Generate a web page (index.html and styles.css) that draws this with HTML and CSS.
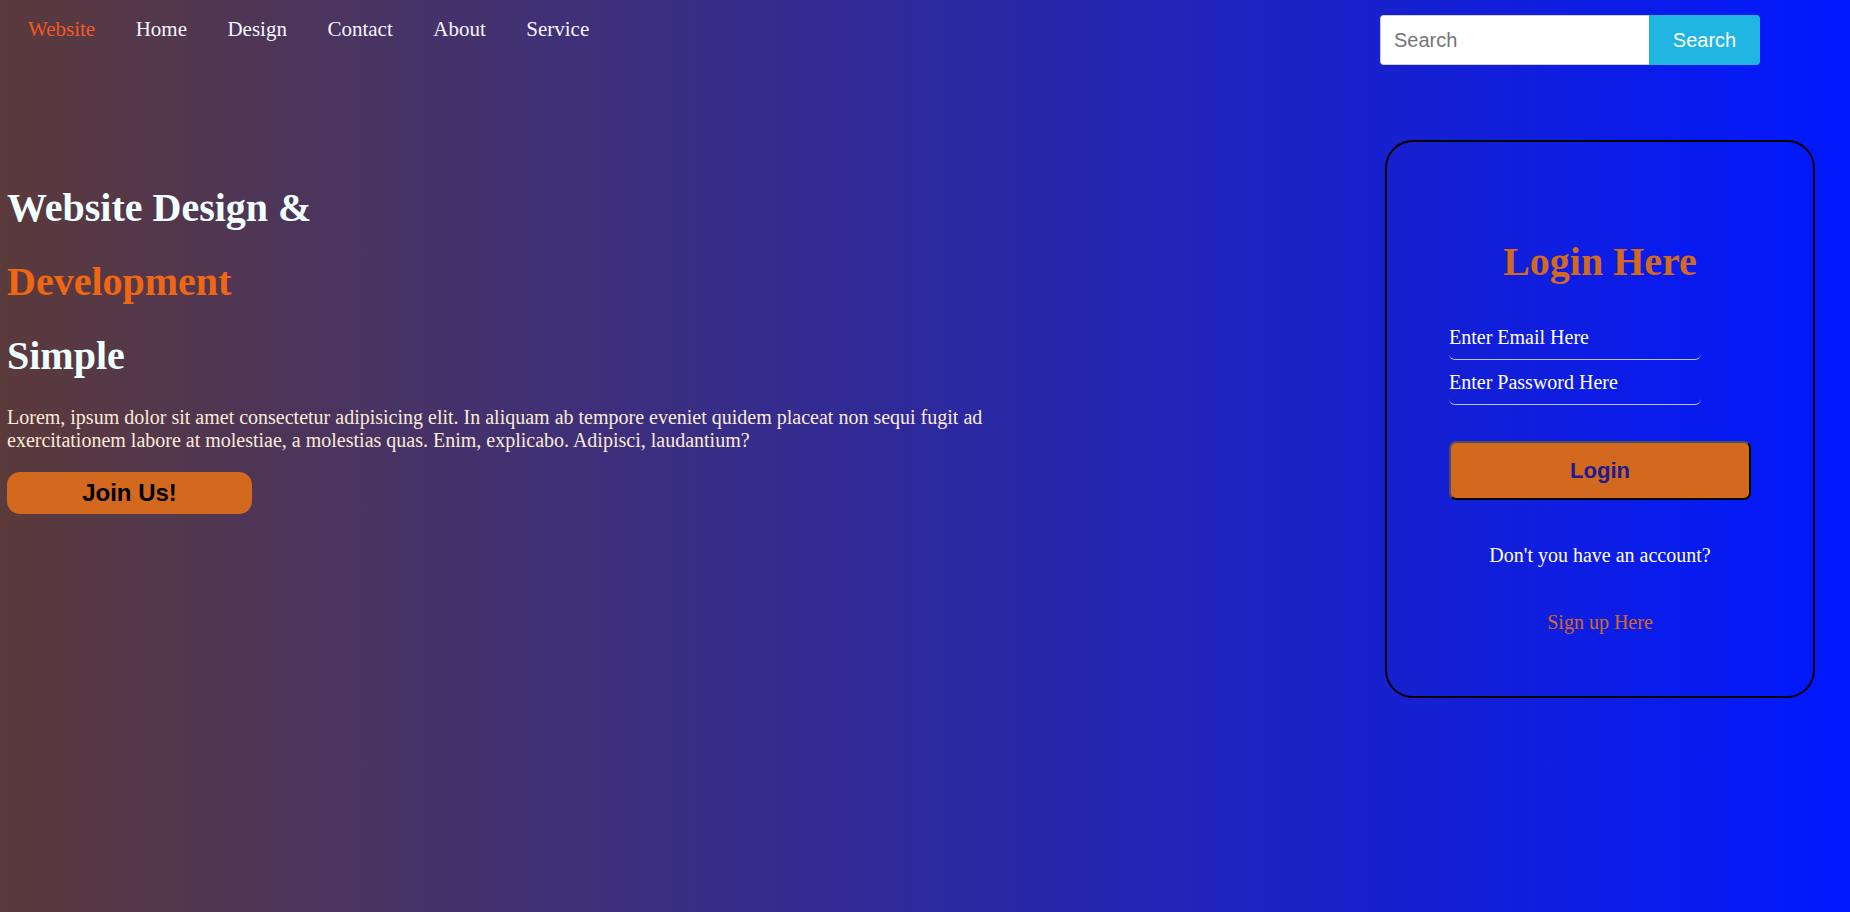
FILE: index.html
```html
<!DOCTYPE html>
<html lang="en">
<head>
<meta charset="UTF-8">
<title>Website Design</title>
<link rel="stylesheet" href="styles.css">
</head>
<body>
  <header class="topbar">
    <nav class="nav">
      <a class="nav-link nav-brand" href="#">Website</a>
      <a class="nav-link" href="#">Home</a>
      <a class="nav-link" href="#">Design</a>
      <a class="nav-link" href="#">Contact</a>
      <a class="nav-link" href="#">About</a>
      <a class="nav-link" href="#">Service</a>
    </nav>
    <form class="search">
      <input class="search-input" type="text" placeholder="Search">
      <button class="search-btn" type="button">Search</button>
    </form>
  </header>
  <main class="main">
    <section class="hero">
      <h1 class="hero-title">Website Design &amp;</h1>
      <h1 class="hero-title hero-accent">Development</h1>
      <h1 class="hero-title">Simple</h1>
      <p class="hero-text">Lorem, ipsum dolor sit amet consectetur adipisicing elit. In aliquam ab tempore eveniet quidem placeat non sequi fugit ad exercitationem labore at molestiae, a molestias quas. Enim, explicabo. Adipisci, laudantium?</p>
      <button class="join-btn" type="button">Join Us!</button>
    </section>
    <section class="card">
      <h2 class="card-title">Login Here</h2>
      <form class="login-form">
        <input class="field" type="email" placeholder="Enter Email Here">
        <input class="field" type="password" placeholder="Enter Password Here">
        <button class="login-btn" type="button">Login</button>
      </form>
      <p class="card-text">Don't you have an account?</p>
      <a class="card-link" href="#">Sign up Here</a>
    </section>
  </main>
</body>
</html>
```
FILE: styles.css
```css
html, body {
  margin: 0;
  height: 100%;
}
body {
  min-height: 912px;
  background: linear-gradient(to right, #5b3a3b 0%, #0018ff 100%);
  font-family: "Liberation Serif", "Times New Roman", serif;
  color: #fff;
}
.topbar {
  display: flex;
  justify-content: space-between;
  align-items: flex-start;
  height: 80px;
  padding: 15px 90px 0 8px;
  box-sizing: border-box;
}
.nav {
  display: flex;
  margin-top: 2px;
}
.nav-link {
  padding: 0 20.25px;
  font-size: 21px;
  line-height: normal;
  color: #f4f6ff;
  text-decoration: none;
}
.nav-brand {
  color: #f25a24;
  padding-left: 20px;
}
.search {
  display: flex;
  margin: 0;
}
.search-input {
  width: 269px;
  height: 50px;
  box-sizing: border-box;
  border: 1px solid #cfcfcf;
  border-right: none;
  border-radius: 4px 0 0 4px;
  padding: 0 13px;
  font-family: "Liberation Sans", Arial, sans-serif;
  font-size: 20px;
  color: #333;
  background: #fff;
  outline: none;
}
.search-input::placeholder {
  color: #757575;
}
.search-btn {
  width: 111px;
  height: 50px;
  border: none;
  border-radius: 0 4px 4px 0;
  background: #1fb4e1;
  color: #fff;
  font-family: "Liberation Sans", Arial, sans-serif;
  font-size: 20px;
  padding: 0;
}
.main {
  display: flex;
  justify-content: space-between;
  align-items: flex-start;
}
.hero {
  width: 1040px;
  margin-top: 77px;
  padding-left: 7px;
}
.hero-title {
  margin: 27px 0;
  font-size: 40px;
  font-weight: bold;
  line-height: normal;
  color: #f0ffff;
}
.hero-accent {
  color: #ef6613;
}
.hero-text {
  margin: 24px 0 20px;
  font-size: 20px;
  line-height: normal;
  color: #faebd7;
}
.join-btn {
  display: block;
  width: 245px;
  height: 42px;
  border: none;
  border-radius: 13px;
  background: #d2691e;
  color: #000;
  font-family: "Liberation Sans", Arial, sans-serif;
  font-size: 24px;
  font-weight: bold;
  padding: 0;
}
.card {
  width: 430px;
  box-sizing: border-box;
  margin: 60px 35px 0 0;
  padding: 96px 0 62px;
  border: 2px solid #000;
  border-radius: 28px;
  display: flex;
  flex-direction: column;
  align-items: center;
}
.card-title {
  margin: 0;
  font-size: 40px;
  font-weight: bold;
  line-height: normal;
  color: #d2691e;
}
.login-form {
  width: 302px;
  margin: 40px 0 0;
  display: flex;
  flex-direction: column;
  align-items: flex-start;
}
.field {
  display: block;
  width: 252px;
  height: 35px;
  box-sizing: border-box;
  margin: 0 0 10px;
  padding: 0 0 10px;
  border: none;
  border-bottom: 1px solid rgba(235, 235, 255, 0.8);
  border-radius: 6px;
  background: transparent;
  font-family: "Liberation Serif", "Times New Roman", serif;
  font-size: 20px;
  color: #fff;
  outline: none;
}
.field::placeholder {
  color: #fff;
}
.login-btn {
  width: 302px;
  height: 59px;
  margin-top: 26px;
  box-sizing: border-box;
  border: 2px solid #000;
  border-top-color: #4d4f5c;
  border-left-color: #4d4f5c;
  border-radius: 7px;
  background: #d2691e;
  color: #1c1c8e;
  font-family: "Liberation Sans", Arial, sans-serif;
  font-size: 22px;
  font-weight: bold;
  padding: 0;
}
.card-text {
  margin: 44px 0 0;
  font-size: 20px;
  line-height: normal;
  color: #fff;
}
.card-link {
  margin-top: 44px;
  font-size: 20px;
  line-height: normal;
  color: #d2691e;
  text-decoration: none;
}
```
